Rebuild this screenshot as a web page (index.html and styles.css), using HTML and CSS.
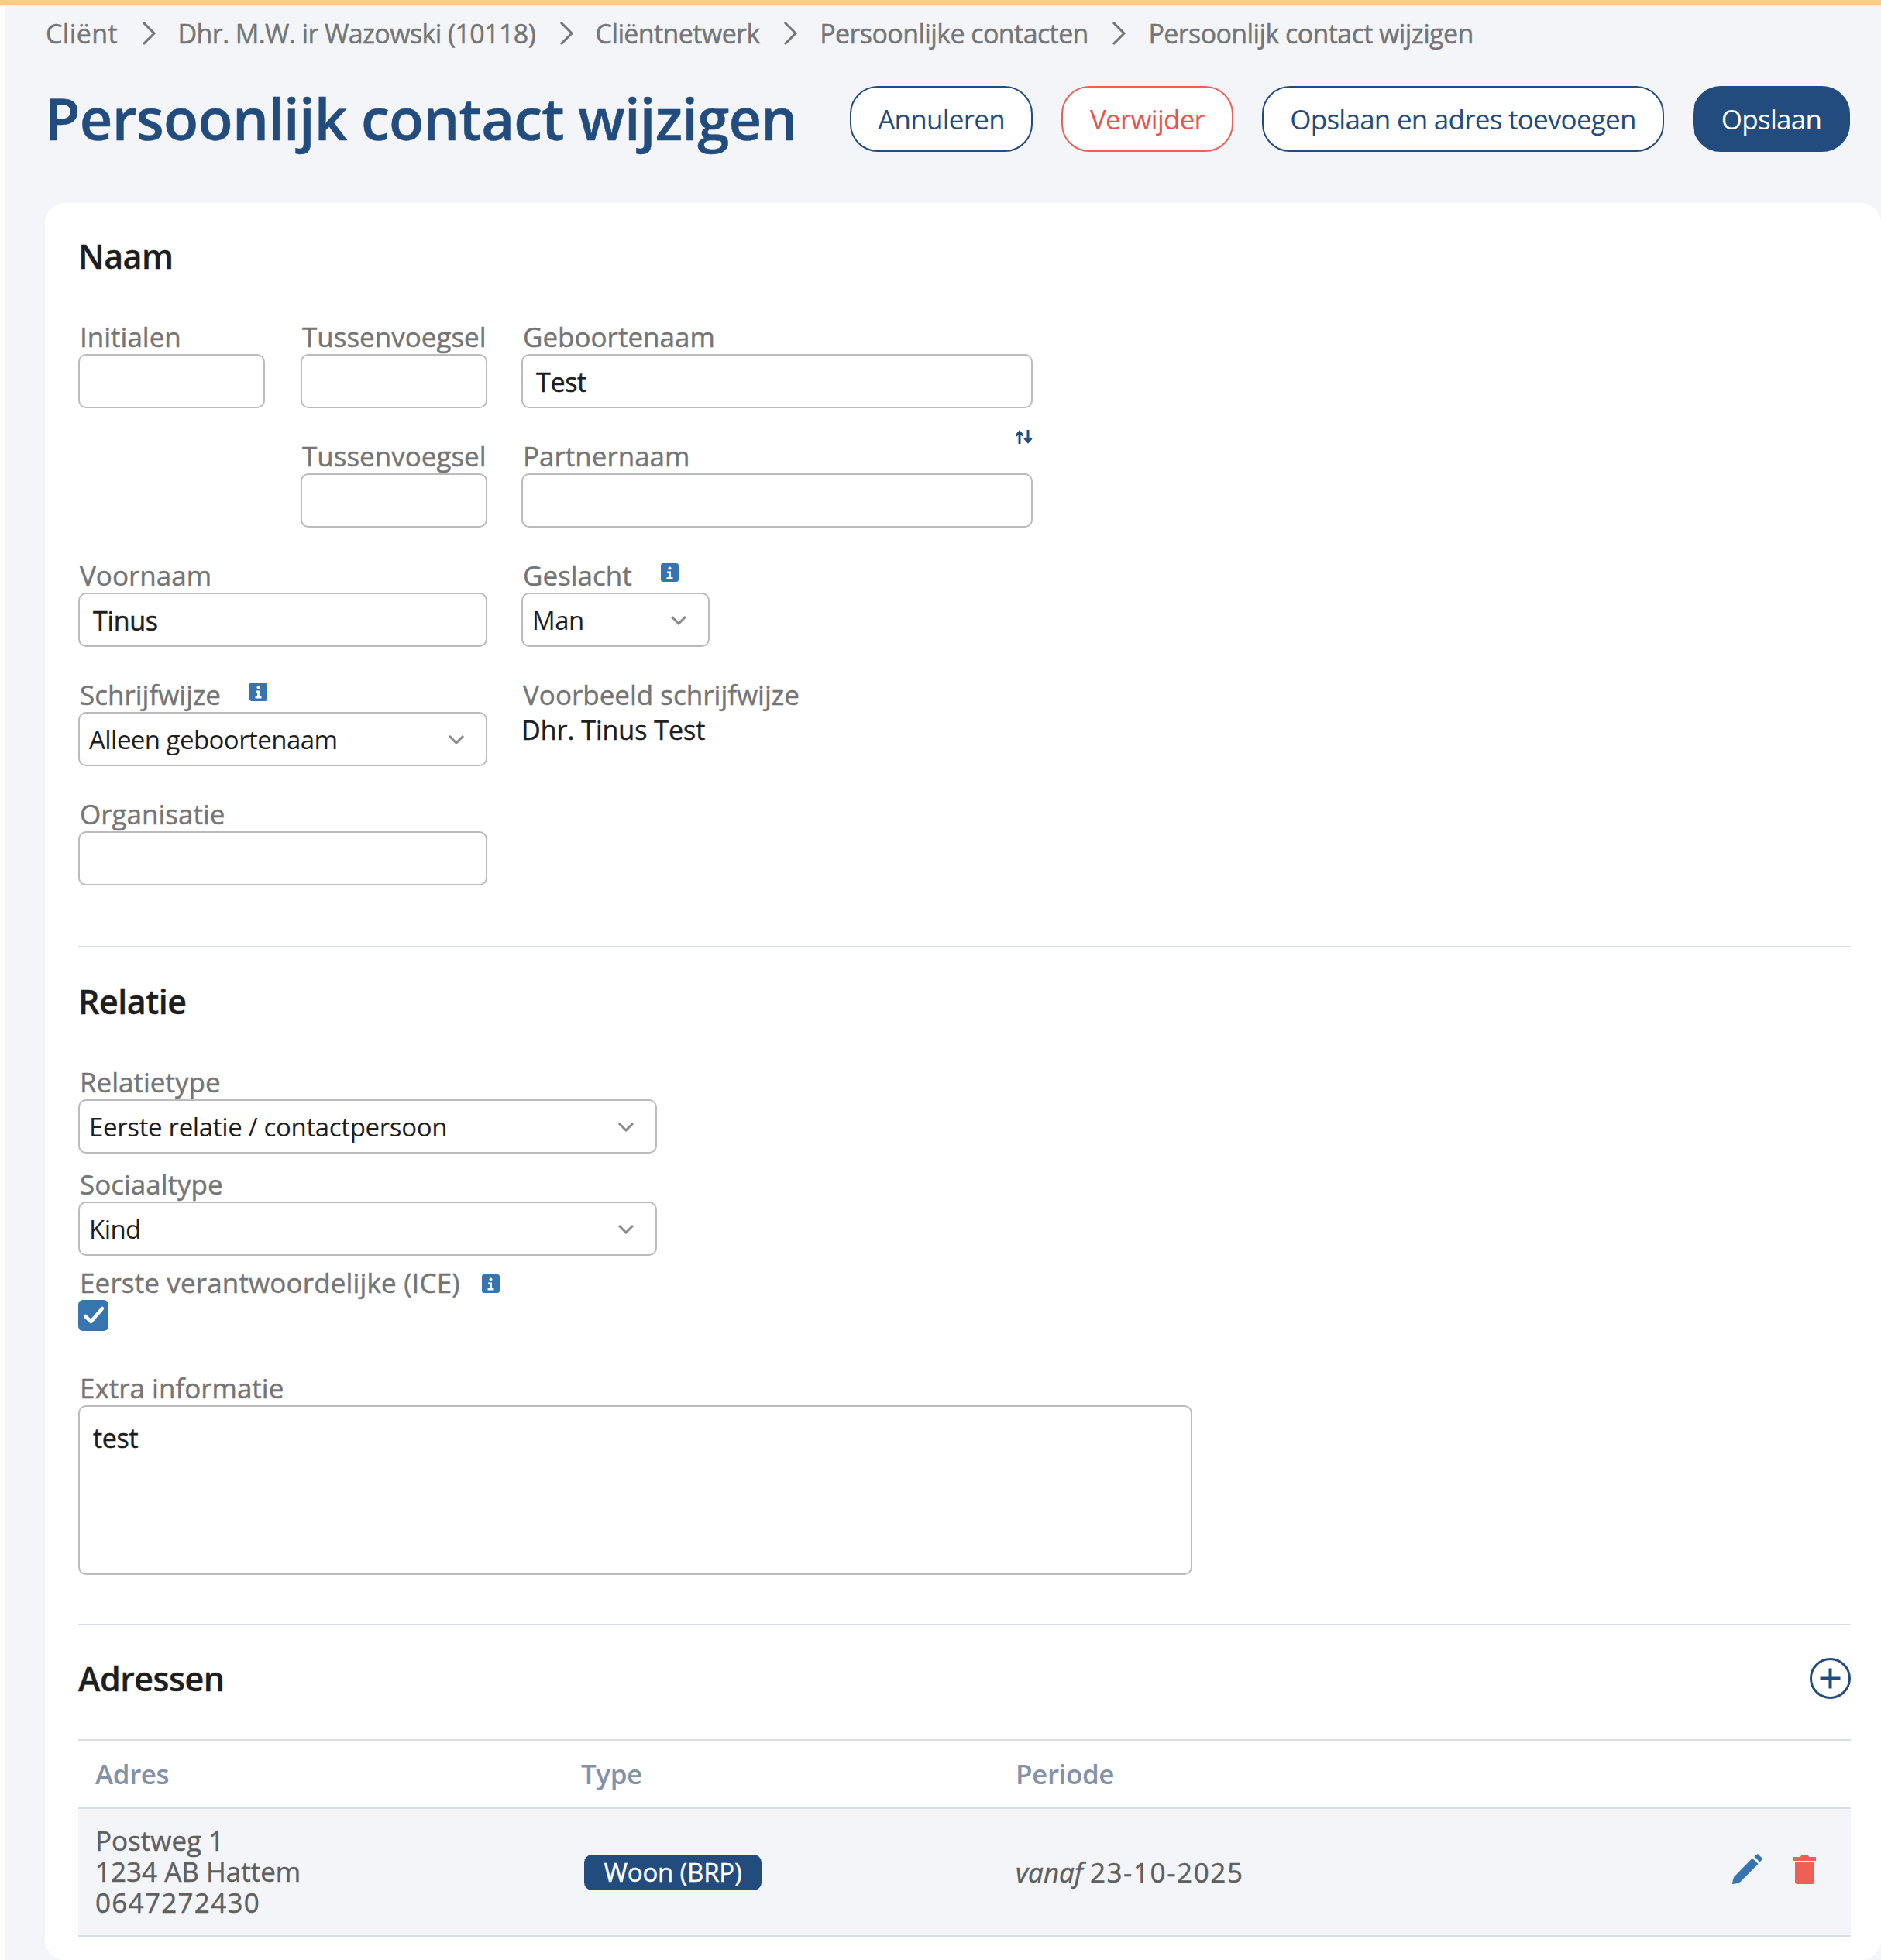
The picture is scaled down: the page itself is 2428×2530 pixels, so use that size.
FILE: index.html
```html
<!DOCTYPE html>
<html lang="nl">
<head>
<meta charset="utf-8">
<title>Persoonlijk contact wijzigen</title>
<link rel="stylesheet" href="styles.css">
</head>
<body>
<div class="topbar"></div>
<main class="page">
  <nav class="crumbs">
    <span class="crumb-first">Cliënt</span>
    <svg class="crumb-sep" viewBox="0 0 20 32"><path d="M3 2l14 14L3 30"/></svg>
    <span>Dhr. M.W. ir Wazowski (10118)</span>
    <svg class="crumb-sep" viewBox="0 0 20 32"><path d="M3 2l14 14L3 30"/></svg>
    <span>Cliëntnetwerk</span>
    <svg class="crumb-sep" viewBox="0 0 20 32"><path d="M3 2l14 14L3 30"/></svg>
    <span>Persoonlijke contacten</span>
    <svg class="crumb-sep" viewBox="0 0 20 32"><path d="M3 2l14 14L3 30"/></svg>
    <span>Persoonlijk contact wijzigen</span>
  </nav>
  <header class="head">
    <h1 class="title">Persoonlijk contact wijzigen</h1>
    <div class="actions">
      <button class="btn btn-annuleren">Annuleren</button>
      <button class="btn btn-danger">Verwijder</button>
      <button class="btn btn-wide">Opslaan en adres toevoegen</button>
      <button class="btn btn-primary">Opslaan</button>
    </div>
  </header>
  <section class="card">
    <h2 class="section-title title-naam">Naam</h2>
    <div class="name-grid">
      <div class="field field-short"><label class="label">Initialen</label><div class="input"></div></div>
      <div class="field"><label class="label">Tussenvoegsel</label><div class="input"></div></div>
      <div class="field"><label class="label">Geboortenaam</label><div class="input input-filled">Test</div></div>

      <div class="field col-2"><label class="label">Tussenvoegsel</label><div class="input"></div></div>
      <div class="field">
        <div class="label label-split">Partnernaam
          <svg class="swap" viewBox="0 0 23 18"><path d="M6 18V3M1.500 7.500L6 2.500l4.500 5M17 0v15M12.500 10.500l4.500 5 4.500-5"/></svg>
        </div>
        <div class="input"></div>
      </div>

      <div class="field span-2"><label class="label">Voornaam</label><div class="input input-filled">Tinus</div></div>
      <div class="field">
        <div class="label"><span>Geslacht</span><svg class="info" viewBox="0 0 23 24"><rect width="23" height="24" rx="3"/><circle cx="11.500" cy="6.500" r="2"/><path d="M8 10.500h5V18h2.500v2.500h-8V18H10v-5H8z"/></svg></div>
        <div class="select select-small">Man<svg class="chev" viewBox="0 0 22 13"><path d="M2 2l9 9 9-9"/></svg></div>
      </div>

      <div class="field span-2">
        <div class="label"><span>Schrijfwijze</span><svg class="info" viewBox="0 0 23 24"><rect width="23" height="24" rx="3"/><circle cx="11.500" cy="6.500" r="2"/><path d="M8 10.500h5V18h2.500v2.500h-8V18H10v-5H8z"/></svg></div>
        <div class="select">Alleen geboortenaam<svg class="chev" viewBox="0 0 22 13"><path d="M2 2l9 9 9-9"/></svg></div>
      </div>
      <div class="field"><label class="label">Voorbeeld schrijfwijze</label><div class="value">Dhr. Tinus Test</div></div>

      <div class="field span-2"><label class="label">Organisatie</label><div class="input"></div></div>
    </div>

    <hr class="rule rule-1">

    <h2 class="section-title title-relatie">Relatie</h2>
    <div class="field field-rel"><label class="label">Relatietype</label><div class="select select-long">Eerste relatie / contactpersoon<svg class="chev" viewBox="0 0 22 13"><path d="M2 2l9 9 9-9"/></svg></div></div>
    <div class="field field-rel field-next"><label class="label">Sociaaltype</label><div class="select">Kind<svg class="chev" viewBox="0 0 22 13"><path d="M2 2l9 9 9-9"/></svg></div></div>
    <div class="field field-next-2">
      <div class="label label-ice"><span>Eerste verantwoordelijke (ICE)</span><svg class="info info-ice" viewBox="0 0 23 24"><rect width="23" height="24" rx="3"/><circle cx="11.500" cy="6.500" r="2"/><path d="M8 10.500h5V18h2.500v2.500h-8V18H10v-5H8z"/></svg></div>
      <svg class="check" viewBox="0 0 39 40"><rect width="39" height="40" rx="6"/><path d="M9 21l7.500 7L31 11"/></svg>
    </div>
    <div class="field field-extra"><label class="label">Extra informatie</label><div class="textarea">test</div></div>

    <hr class="rule rule-2">

    <div class="sec-head">
      <h2 class="section-title">Adressen</h2>
      <svg class="plus" viewBox="0 0 53 53"><circle cx="26.500" cy="26.500" r="25"/><path d="M26.500 13.500v26M13.500 26.500h26"/></svg>
    </div>

    <table class="table">
      <thead>
        <tr><th class="c-adres">Adres</th><th class="c-type">Type</th><th>Periode</th><th class="c-icons"></th></tr>
      </thead>
      <tbody>
        <tr>
          <td class="cell-adres">Postweg 1<br>1234 AB Hattem<br><span class="num">0647272430</span></td>
          <td><span class="badge">Woon (BRP)</span></td>
          <td><em>vanaf</em> <span class="num num-date">23-10-2025</span></td>
          <td>
            <div class="row-icons">
              <svg class="pencil" viewBox="0 0 39 39"><path d="M0 39c.3-3 1-6.500 2.500-9.500L26 5.500l7.500 7.500L10 36.500C7 38 3.500 39 0 39z"/><path d="M28.500 3.500L31 1c1-1 2-1 3 0l4 4c1 1 1 2 0 3l-2.500 2.500z"/></svg>
              <svg class="trash" viewBox="0 0 29 37"><path d="M9 2c0-1.500 1-2 2-2h7c1 0 2 .5 2 2h9v5H0V2z"/><path d="M2 9h25v25c0 2-1 3-3 3H5c-2 0-3-1-3-3z"/></svg>
            </div>
          </td>
        </tr>
      </tbody>
    </table>
  </section>
</main>
</body>
</html>
```

FILE: styles.css
```css
* { box-sizing: border-box; }
html, body { margin: 0; padding: 0; }
body {
  width: 2428px;
  height: 2530px;
  overflow: hidden;
  background: #ffffff;
  font-family: "Open Sans", "Noto Sans", sans-serif;
  font-size: 35px;
  color: #1e1e1e;
}
.topbar { height: 6px; background: #f8cd85; }
.page {
  margin-left: 6px;
  height: 2524px;
  background: #f3f5f9;
  padding-left: 52px;
  display: flex;
  flex-direction: column;
}
.crumbs {
  height: 74px;
  display: flex;
  align-items: center;
  color: #757575;
  font-size: 34px;
  letter-spacing: -0.6px;
  -webkit-text-stroke: 0.45px #757575;
  padding-left: 1px;
}
.crumb-first { letter-spacing: 0.4px; }
.crumb-sep {
  width: 20px;
  height: 32px;
  margin: 0 28px 0 29.5px;
  fill: none;
  stroke: #757575;
  stroke-width: 3;
}
.head {
  height: 182px;
  display: flex;
  align-items: flex-start;
  padding-top: 30px;
}
.title {
  margin: 0;
  font-size: 74px;
  line-height: 85px;
  font-weight: 600;
  color: #224c7e;
  letter-spacing: -0.75px;
  -webkit-text-stroke: 0.5px #224c7e;
  width: 1039px;
  white-space: nowrap;
}
.actions { display: flex; gap: 37px; padding-top: 1px; }
.btn {
  height: 85px;
  border-radius: 36px;
  border: 2px solid #224c7e;
  background: #ffffff;
  color: #224c7e;
  font-family: inherit;
  font-size: 35px;
  letter-spacing: -0.75px;
  padding: 0;
}
.btn-annuleren { width: 236px; }
.btn-danger { width: 222px; border-color: #ee6055; color: #e9544a; }
.btn-wide { width: 519px; }
.btn-primary { width: 203px; background: #224c7e; color: #ffffff; }

.card {
  flex: 1;
  background: #ffffff;
  border-radius: 26px;
  padding: 0 39px 0 43px;
  width: 2370px;
}
.section-title {
  margin: 0;
  font-size: 43px;
  line-height: 54px;
  font-weight: 600;
  color: #1e1e1e;
  letter-spacing: -0.5px;
  -webkit-text-stroke: 0.4px #1e1e1e;
}
.title-naam { padding-top: 42px; box-sizing: content-box; }
.name-grid {
  margin-top: 58px;
  display: grid;
  grid-template-columns: 243px 241px 660px;
  column-gap: 44px;
  row-gap: 43px;
}
.col-2 { grid-column: 2; }
.span-2 { grid-column: 1 / span 2; }
.field-short .input { width: 241px; }
.label {
  display: flex;
  align-items: center;
  height: 41px;
  color: #757575;
  font-size: 35px;
  line-height: 41px;
  -webkit-text-stroke: 0.45px #757575;
  white-space: nowrap;
  padding: 0 0 5px 2px;
}
.label-split { justify-content: space-between; position: relative; }
.label-ice { letter-spacing: 0.15px; }
.swap {
  position: absolute;
  right: 0;
  top: -15px;
  width: 23px;
  height: 18px;
  fill: none;
  stroke: #224c7e;
  stroke-width: 3;
}
.input, .select, .textarea {
  height: 70px;
  border: 2px solid #bbbbbb;
  border-radius: 10px;
  background: #ffffff;
}
.input-filled {
  display: flex;
  align-items: center;
  padding: 2px 0 0 17px;
  font-size: 34px;
  letter-spacing: -0.3px;
  -webkit-text-stroke: 0.5px #1e1e1e;
}
.select {
  display: flex;
  align-items: center;
  justify-content: space-between;
  padding: 0 27px 0 12px;
  font-size: 33px;
  letter-spacing: -0.55px;
}
.select-long { letter-spacing: -0.35px; }
.select-small { width: 243px; }
.chev {
  width: 22px;
  height: 13px;
  fill: none;
  stroke: #8a8a8a;
  stroke-width: 3;
  flex: none;
}
.info {
  width: 23px;
  height: 24px;
  margin: -6px 0 0 37px;
  flex: none;
}
.info rect { fill: #3775b0; }
.info circle, .info path { fill: #ffffff; }
.info-ice { margin: 3px 0 0 28px; }
.value {
  font-size: 34px;
  line-height: 46px;
  -webkit-text-stroke: 0.5px #1e1e1e;
}
.rule {
  border: 0;
  height: 2px;
  background: #d9dde6;
  margin: 0;
  width: 100%;
}
.rule-1 { margin-top: 78px; }
.title-relatie { margin-top: 43px; }
.field-rel { width: 747px; }
.title-relatie + .field-rel { margin-top: 58px; }
.field-rel.field-next { margin-top: 21px; }
.field-next-2 { margin-top: 16px; }
.check { display: block; width: 39px; height: 40px; }
.check rect { fill: #3775b0; }
.check path { fill: none; stroke: #ffffff; stroke-width: 4.5; stroke-linecap: round; stroke-linejoin: round; }
.field-extra { margin-top: 55px; width: 1438px; }
.textarea {
  height: 219px;
  padding: 17px 17px;
  font-size: 34px;
  line-height: 46px;
  letter-spacing: -0.3px;
  -webkit-text-stroke: 0.5px #1e1e1e;
}
.rule-2 { margin-top: 63px; }
.sec-head {
  height: 147px;
  display: flex;
  align-items: center;
  justify-content: space-between;
  padding-bottom: 10px;
}
.plus { width: 53px; height: 53px; fill: none; stroke: #224c7e; }
.plus circle { stroke-width: 3; }
.plus path { stroke-width: 4; }
.table {
  width: 100%;
  border-collapse: collapse;
  table-layout: fixed;
  border-top: 2px solid #d9dde6;
}
.c-adres { width: 626px; }
.c-type { width: 561px; }
.c-icons { width: 200px; }
.table th {
  height: 88px;
  text-align: left;
  padding: 0 0 2px 23px;
  color: #8492a9;
  font-size: 35px;
  font-weight: 600;
  letter-spacing: -0.4px;
  border-bottom: 2px solid #d9dde6;
}
.table th.c-adres, .table .cell-adres { padding-left: 22px; }
.table td {
  height: 165px;
  padding: 0 0 0 23px;
  background: #f3f5f9;
  color: #5f5f5f;
  font-size: 35px;
  line-height: 40px;
  -webkit-text-stroke: 0.45px #5f5f5f;
  border-bottom: 2px solid #d9dde6;
}
.table .cell-adres { padding-bottom: 2px; }
.table em { font-style: italic; }
.num { letter-spacing: 1.3px; }
.num-date { letter-spacing: 1.6px; }
.badge {
  display: inline-block;
  width: 229px;
  height: 46px;
  line-height: 46px;
  margin-left: 4px;
  border-radius: 10px;
  background: #224c7e;
  color: #ffffff;
  text-align: center;
  font-size: 33px;
  letter-spacing: -0.2px;
  -webkit-text-stroke: 0.4px #ffffff;
  vertical-align: middle;
}
.row-icons {
  display: flex;
  justify-content: flex-end;
  align-items: flex-start;
  gap: 40px;
  padding: 0 45px 8px 0;
}
.pencil { width: 39px; height: 39px; fill: #3775b0; }
.trash { width: 29px; height: 37px; fill: #ee6055; margin-top: 2px; }
```
